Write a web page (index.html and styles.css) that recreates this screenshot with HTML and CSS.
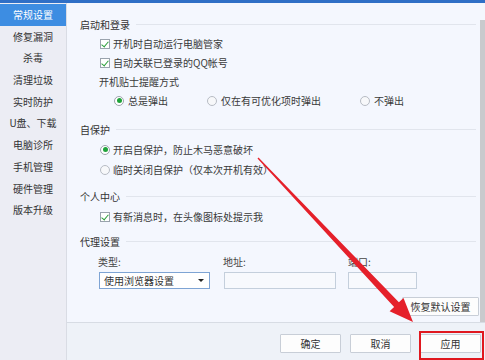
FILE: index.html
```html
<!DOCTYPE html>
<html lang="zh-CN">
<head>
    <meta charset="UTF-8">
    <title>电脑管家 设置</title>
    <link rel="stylesheet" href="styles.css">
</head>
<body>
    <div class="window">
        <div class="topbar"></div>
        <div class="win-body">
            <!-- 左侧菜单 -->
            <ul class="sidebar">
                <li class="nav-item active">常规设置</li>
                <li class="nav-item">修复漏洞</li>
                <li class="nav-item">杀毒</li>
                <li class="nav-item">清理垃圾</li>
                <li class="nav-item">实时防护</li>
                <li class="nav-item">U盘、下载</li>
                <li class="nav-item">电脑诊所</li>
                <li class="nav-item">手机管理</li>
                <li class="nav-item">硬件管理</li>
                <li class="nav-item">版本升级</li>
            </ul>

            <div class="main">
                <div class="content">
                    <!-- 启动和登录 -->
                    <div class="section section-first">
                        <div class="section-title">启动和登录</div>
                        <div class="row row-sm"><span class="check on"></span>开机时自动运行电脑管家</div>
                        <div class="row row-sm"><span class="check on"></span>自动关联已登录的QQ帐号</div>
                        <div class="row row-sm row-label">开机贴士提醒方式</div>
                        <div class="row row-sm radio-group">
                            <div class="opt opt-a"><span class="radio on"></span>总是弹出</div>
                            <div class="opt opt-b"><span class="radio"></span>仅在有可优化项时弹出</div>
                            <div class="opt"><span class="radio"></span>不弹出</div>
                        </div>
                    </div>

                    <!-- 自保护 -->
                    <div class="section section-self">
                        <div class="section-title">自保护</div>
                        <div class="row"><span class="radio on"></span>开启自保护，防止木马恶意破坏</div>
                        <div class="row"><span class="radio"></span>临时关闭自保护（仅本次开机有效）</div>
                    </div>

                    <!-- 个人中心 -->
                    <div class="section section-user">
                        <div class="section-title">个人中心</div>
                        <div class="row"><span class="check on"></span>有新消息时，在头像图标处提示我</div>
                    </div>

                    <!-- 代理设置 -->
                    <div class="section section-proxy">
                        <div class="section-title">代理设置</div>
                        <div class="proxy">
                            <div class="field field-type">
                                <div class="field-label">类型:</div>
                                <div class="select">使用浏览器设置<span class="caret"></span></div>
                            </div>
                            <div class="field field-addr">
                                <div class="field-label">地址:</div>
                                <div class="input"></div>
                            </div>
                            <div class="field field-port">
                                <div class="field-label">端口:</div>
                                <div class="input"></div>
                            </div>
                        </div>
                        <div class="restore-row">
                            <button class="btn btn-restore">恢复默认设置</button>
                        </div>
                    </div>

                    <div class="scrollbar"></div>
                </div>

                <div class="footer">
                    <button class="btn">确定</button>
                    <button class="btn">取消</button>
                    <button class="btn">应用</button>
                </div>
            </div>
        </div>
    </div>

    <!-- 标注：红色箭头和框 -->
    <svg class="annotation" width="485" height="360" viewBox="0 0 485 360">
        <polygon fill="#e5202a" points="257.5,158.5 258.5,157.5 398.9,302.3 403.5,298 413,322 389.6,311.2 394.1,306.9"/>
        <rect x="420" y="332" width="63" height="27" fill="none" stroke="#e0181f" stroke-width="2"/>
    </svg>
</body>
</html>
```

FILE: styles.css
```css
* {
    margin: 0;
    padding: 0;
    box-sizing: border-box;
}

body {
    width: 485px;
    height: 360px;
    font-family: "Noto Sans CJK SC", "Microsoft YaHei", sans-serif;
    font-size: 10px;
    color: #3a3a3a;
    background: #f4f7fd;
    overflow: hidden;
    position: relative;
}

.window {
    height: 100%;
    display: flex;
    flex-direction: column;
}

.topbar {
    height: 3px;
    background: #2f6fc6;
}

.win-body {
    flex: 1;
    display: flex;
}

/* 左侧菜单 */
.sidebar {
    width: 67px;
    list-style: none;
    padding-top: 1px;
    background: #ecedf4;
    border-right: 1px solid #d9dce4;
}

.nav-item {
    height: 21.7px;
    line-height: 21.7px;
    text-align: center;
    color: #333;
}

.nav-item.active {
    background: #3d8de2;
    color: #fff;
}

/* 主区域 */
.main {
    flex: 1;
    display: flex;
    flex-direction: column;
}

.content {
    flex: 1;
    position: relative;
    padding: 0 6px 0 13px;
    background: #f4f7fe;
}

.scrollbar {
    position: absolute;
    right: 0;
    top: 17px;
    bottom: 0;
    width: 5px;
    background: #c9cacd;
}

.section-first { margin-top: 11px; }
.section-self { margin-top: 9.5px; }
.section-user { margin-top: 7px; }
.section-proxy { margin-top: 5px; }

.section-title {
    height: 20px;
    display: flex;
    align-items: center;
    gap: 6px;
    margin-right: 3px;
    color: #333;
}

.section-title::after {
    content: "";
    flex: 1;
    height: 1px;
    background: #e1e5ed;
}

.row {
    height: 20px;
    display: flex;
    align-items: center;
    gap: 3px;
    padding-left: 20px;
    white-space: nowrap;
}

.row-sm {
    height: 19px;
}

.row-label {
    padding-left: 19px;
}

.radio-group {
    padding-left: 34px;
    gap: 0;
}

.opt {
    display: flex;
    align-items: center;
    gap: 4px;
}

.opt-a { width: 93px; }
.opt-b { width: 153px; }

/* 复选框 */
.check {
    width: 10px;
    height: 10px;
    border: 1px solid #9aa3ad;
    background: #fff;
    position: relative;
    flex-shrink: 0;
}

.check.on::after {
    content: "";
    position: absolute;
    left: 2px;
    top: 0;
    width: 3px;
    height: 6px;
    border: solid #2b9e3a;
    border-width: 0 1.5px 1.5px 0;
    transform: rotate(40deg);
}

/* 单选框 */
.radio {
    width: 10px;
    height: 10px;
    border-radius: 50%;
    border: 1px solid #b7bcc4;
    background: #f7f8fa;
    position: relative;
    flex-shrink: 0;
}

.radio.on {
    border-color: #9da4ad;
    background: #fff;
}

.radio.on::after {
    content: "";
    position: absolute;
    left: 1.5px;
    top: 1.5px;
    width: 5px;
    height: 5px;
    border-radius: 50%;
    background: #1fa33a;
}

/* 代理设置 */
.proxy {
    display: flex;
    padding-left: 18px;
}

.field-label {
    height: 20px;
    line-height: 20px;
    color: #444;
}

.field-type { width: 125px; }
.field-addr { width: 125px; }
.field-port { width: 70px; }

.field-type .select {
    margin-left: 1px;
}

.select {
    width: 111px;
    height: 17px;
    border: 1px solid #7ea4d4;
    background: #fff;
    display: flex;
    align-items: center;
    padding: 0 5px 0 4px;
    color: #333;
}

.caret {
    margin-left: auto;
    width: 0;
    height: 0;
    border-left: 3px solid transparent;
    border-right: 3px solid transparent;
    border-top: 3px solid #222;
}

.input {
    height: 17px;
    border: 1px solid #c4cfdc;
    background: #f7f9fd;
}

.field-addr .input { width: 112px; margin-left: 1px; }
.field-port .input { width: 69px; }

.restore-row {
    display: flex;
    justify-content: flex-end;
    margin-top: 8px;
}

.btn {
    width: 61px;
    height: 19px;
    font-family: inherit;
    font-size: 10px;
    color: #333;
    background: #fdfdfd;
    border: 1px solid #c8ced7;
    border-radius: 1px;
}

.btn-restore {
    width: 77px;
}

/* 底部按钮 */
.footer {
    height: 38px;
    display: flex;
    justify-content: flex-end;
    align-items: flex-start;
    gap: 9px;
    padding: 11px 4px 0 0;
    background: #eef2f8;
    border-top: 1px solid #d7dce4;
}

.annotation {
    position: absolute;
    left: 0;
    top: 0;
    pointer-events: none;
}
```
